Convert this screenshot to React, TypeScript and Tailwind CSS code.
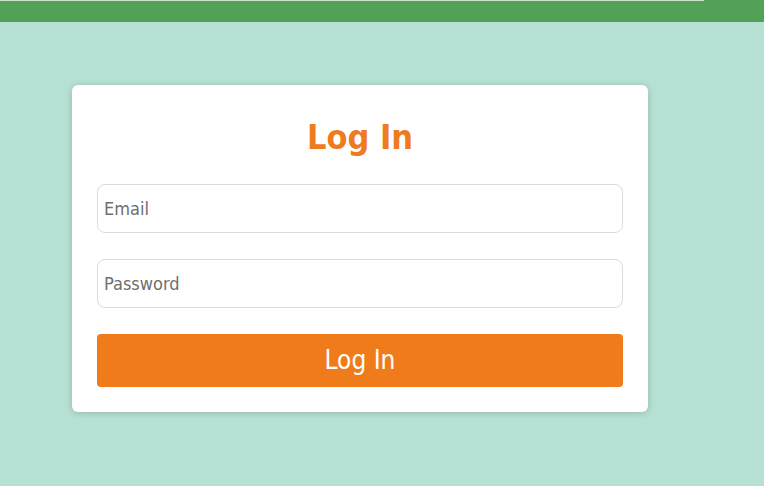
import React from 'react';

const App = () => {
    return (
        <div className="min-h-[486px] bg-[#b6e0d4]" style={{ fontFamily: '"DejaVu Sans Condensed", "DejaVu Sans", sans-serif' }}>
            {/* top bar */}
            <div className="h-[22px] bg-[#52a157] relative">
                <div className="absolute left-0 top-0 h-px w-[704px] bg-white/70" />
            </div>

            <div className="pt-[63px] pl-[72px]">
                <div className="w-[576px] rounded-md bg-white px-[25px] pt-[30px] pb-[25px] shadow-[0_1px_6px_rgba(0,0,0,0.18)]">
                    <h1 className="text-center text-[34px] font-bold leading-[44px] text-[#ef7b1f]">Log In</h1>
                    <form className="mt-[25px] flex flex-col" onSubmit={e => e.preventDefault()}>
                        <input
                            type="email"
                            placeholder="Email"
                            className="h-[49px] rounded-lg border border-[#dcdcdc] px-[6px] text-[18px] text-gray-700 placeholder:text-[#6f6f6f] outline-none"
                        />
                        <input
                            type="password"
                            placeholder="Password"
                            className="mt-[26px] h-[49px] rounded-lg border border-[#dcdcdc] px-[6px] text-[18px] text-gray-700 placeholder:text-[#6f6f6f] outline-none"
                        />
                        <button
                            type="submit"
                            className="mt-[26px] h-[53px] rounded-sm bg-[#f07b1a] text-[26px] text-white"
                        >
                            Log In
                        </button>
                    </form>
                </div>
            </div>
        </div>
    );
};

export default App;
